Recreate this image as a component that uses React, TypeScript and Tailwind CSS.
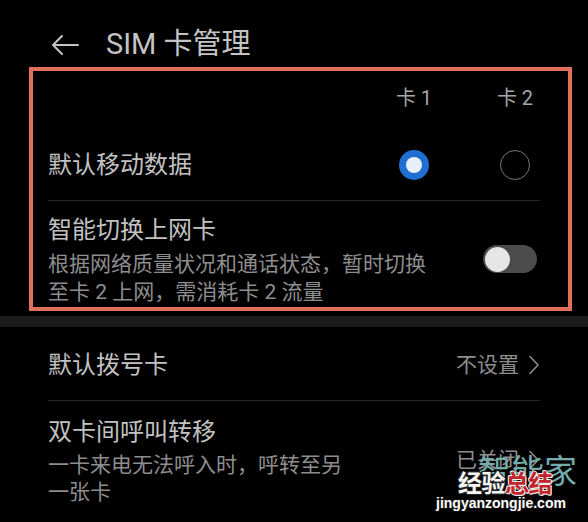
import type { ReactNode } from 'react';

const font = "font-['Roboto','Noto_Sans_CJK_SC',sans-serif]";

const BackArrow = () => (
  <svg width="28" height="22" viewBox="0 0 28 22" fill="none">
    <path
      d="M2 11 H27 M11 2 L2 11 L11 20"
      stroke="#c4c4c4"
      strokeWidth="2"
      strokeLinecap="round"
      strokeLinejoin="round"
    />
  </svg>
);

const Chevron = () => (
  <svg width="12" height="20" viewBox="0 0 12 20" fill="none" className="ml-[9px]">
    <path
      d="M2 1.5 L10 10 L2 18.5"
      stroke="#8c8c8c"
      strokeWidth="1.6"
      strokeLinecap="round"
      strokeLinejoin="round"
    />
  </svg>
);

const Radio = ({ checked }: { checked?: boolean }) =>
  checked ? (
    <div className="w-[30px] h-[30px] rounded-full bg-[#1f6fd3] flex items-center justify-center">
      <div className="w-[16px] h-[16px] rounded-full bg-[#e8eff8]" />
    </div>
  ) : (
    <div className="w-[30px] h-[30px] rounded-full border-[1.5px] border-[#777777]" />
  );

const Toggle = () => (
  <div className="w-[54px] h-[28px] rounded-full bg-[#4b4b4b] p-[2px] flex items-center">
    <div className="w-[25px] h-[25px] rounded-full bg-[#e6e6e6]" />
  </div>
);

const Title = ({ children }: { children: ReactNode }) => (
  <div className="text-[24px] leading-[32px] text-[#c2c2c2] whitespace-nowrap">{children}</div>
);

const Value = ({ children }: { children: ReactNode }) => (
  <div className="flex items-center text-[21px] leading-[32px] text-[#8e8e8e] whitespace-nowrap">
    {children}
    <Chevron />
  </div>
);

export default function App() {
  return (
    <div className={`relative w-[588px] h-[522px] overflow-hidden bg-black ${font}`}>
      {/* toolbar */}
      <div className="flex items-center h-[67px] pt-[22px] pl-[51px]">
        <BackArrow />
        <span className="ml-[27px] text-[29px] leading-none text-[#c4c4c4]">SIM 卡管理</span>
      </div>

      {/* mobile data section */}
      <div className="ml-[29px] mr-[16px] border-4 border-[#e06f5c] pl-[15px] pr-[28px]">
        <div className="flex items-center h-[59px] pb-[6px] text-[20px] text-[#a6a6a6]">
          <div className="flex-1" />
          <div className="w-[50px] text-center">卡 1</div>
          <div className="w-[51px]" />
          <div className="w-[50px] text-center">卡 2</div>
        </div>

        <div className="flex items-center h-[71px] border-b border-[#262626]">
          <div className="flex-1">
            <Title>默认移动数据</Title>
          </div>
          <div className="w-[50px] flex justify-center">
            <Radio checked />
          </div>
          <div className="w-[51px]" />
          <div className="w-[50px] flex justify-center">
            <Radio />
          </div>
        </div>

        <div className="flex items-center pt-[13px] pb-[1px]">
          <div className="flex-1">
            <Title>智能切换上网卡</Title>
            <div className="mt-[4px] text-[21px] leading-[28px] text-[#8e8e8e] whitespace-nowrap">
              <div>根据网络质量状况和通话状态，暂时切换</div>
              <div>至卡 2 上网，需消耗卡 2 流量</div>
            </div>
          </div>
          <div className="mr-[3px] mb-[2px]">
            <Toggle />
          </div>
        </div>
      </div>

      <div className="mt-[5px] h-[11px] bg-[#1b1b1b]" />

      {/* calls section */}
      <div className="mx-[48px]">
        <div className="flex items-center justify-between h-[74px] pt-[2px] border-b border-[#262626]">
          <Title>默认拨号卡</Title>
          <Value>不设置</Value>
        </div>

        <div className="flex justify-between pt-[15px]">
          <div>
            <Title>双卡间呼叫转移</Title>
            <div className="mt-[4px] text-[21px] leading-[27px] text-[#8e8e8e] whitespace-nowrap">
              <div>一卡来电无法呼入时，呼转至另</div>
              <div>一张卡</div>
            </div>
          </div>
          <div className="pt-[28px]">
            <Value>已关闭</Value>
          </div>
        </div>
      </div>

      {/* site watermark */}
      <div className="absolute left-[478px] top-[455px] text-[33px] leading-none text-[#74abab] whitespace-nowrap">
        智能家
      </div>
      <div className="absolute left-[458px] top-[472px] text-[24px] leading-[24px] font-bold tracking-[-0.5px] whitespace-nowrap">
        <span className="text-[#f4f4f4] [text-shadow:1px_0_0_#222,-1px_0_0_#222,0_1px_0_#222,0_-1px_0_#222,1px_1px_0_#222,-1px_-1px_0_#222]">
          经验
        </span>
        <span className="text-[#c3232b] [text-shadow:1px_0_0_#eee,-1px_0_0_#eee,0_1px_0_#eee,0_-1px_0_#eee,1px_1px_0_#eee,-1px_-1px_0_#eee]">
          总结
        </span>
      </div>
      <div className="absolute left-[436px] top-[496px] font-['Liberation_Sans',sans-serif] text-[14px] leading-[14px] font-bold text-white whitespace-nowrap [text-shadow:1px_0_0_#111,-1px_0_0_#111,0_1px_0_#111,0_-1px_0_#111,1px_1px_0_#111,-1px_-1px_0_#111]">
        jingyanzongjie.com
      </div>
    </div>
  );
}
